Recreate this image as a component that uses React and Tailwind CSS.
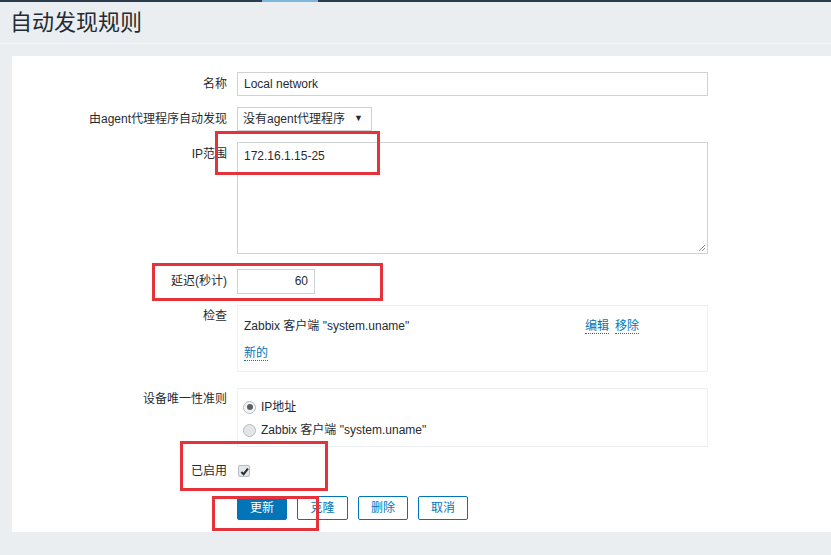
import { useState } from 'react';

const font = { fontFamily: '"Liberation Sans", Arial, "Noto Sans CJK SC", sans-serif' };

function Label({ children, className = '' }) {
  return (
    <div className={`w-[225px] shrink-0 pr-[10px] text-right text-[#1f2c33] ${className}`}>{children}</div>
  );
}

function Radio({ checked }) {
  return (
    <span
      className={`inline-flex items-center justify-center w-[13px] h-[13px] rounded-full border border-[#b7bcc0] ${
        checked ? 'bg-[#f4f4f4]' : 'bg-[#e3e5e7]'
      }`}
    >
      {checked && <span className="w-[6px] h-[6px] rounded-full bg-[#5a5f63]" />}
    </span>
  );
}

export default function App() {
  const [enabled] = useState(true);

  return (
    <div className="relative w-[831px] h-[555px] overflow-hidden bg-[#ebeef1] text-[12px]" style={font}>
      {/* top bar */}
      <div className="h-[2px] bg-[#2b3b4b] flex">
        <div className="ml-[262px] w-[56px] bg-[#7fb6dc]" />
      </div>

      {/* header */}
      <div className="h-[42px] pl-[10px] flex items-center border-b border-[#f3f5f6]">
        <h1 className="text-[22px] text-[#1f2c33] font-normal leading-none">自动发现规则</h1>
      </div>

      {/* panel */}
      <div className="ml-[12px] mt-[12px] h-[476px] bg-white pt-[16px]">
        {/* 名称 */}
        <div className="flex">
          <Label className="leading-[24px]">名称</Label>
          <div className="w-[471px] h-[24px] border border-[#cfd3d5] px-[6px] leading-[22px] text-[#1f2c33]">
            Local network
          </div>
        </div>

        {/* proxy */}
        <div className="flex mt-[11px]">
          <Label className="leading-[24px]">由agent代理程序自动发现</Label>
          <div className="w-[135px] h-[24px] border border-[#cfd3d5] pl-[5px] pr-[8px] flex items-center justify-between text-[#1f2c33]">
            <span>没有agent代理程序</span>
            <span className="text-[9px] text-[#1f2c33]">▼</span>
          </div>
        </div>

        {/* IP range */}
        <div className="flex mt-[11px]">
          <Label className="leading-[24px]">IP范围</Label>
          <div className="relative w-[471px] h-[112px] border border-[#cfd3d5] px-[6px] pt-[4px] text-[#1f2c33]">
            172.16.1.15-25
            <svg className="absolute right-[1px] bottom-[1px]" width="9" height="9" viewBox="0 0 9 9">
              <path d="M8 2 L2 8 M8 5 L5 8" stroke="#8a8f93" strokeWidth="1" />
            </svg>
          </div>
        </div>

        {/* delay */}
        <div className="flex mt-[15px]">
          <Label className="leading-[25px]">延迟(秒计)</Label>
          <div className="w-[78px] h-[25px] border border-[#cfd3d5] px-[6px] leading-[23px] text-right text-[#1f2c33]">
            60
          </div>
        </div>

        {/* checks */}
        <div className="flex mt-[11px]">
          <Label className="leading-[22px]">检查</Label>
          <div className="w-[471px] h-[67px] border border-[#edf0f2] pl-[6px] pt-[12px] text-[#1f2c33]">
            <div className="flex items-center h-[16px]">
              <span className="w-[341px]">Zabbix 客户端 "system.uname"</span>
              <span className="text-[#0275b8] border-b border-dotted border-[#0275b8] leading-[14px]">编辑</span>
              <span className="ml-[6px] text-[#0275b8] border-b border-dotted border-[#0275b8] leading-[14px]">移除</span>
            </div>
            <div className="mt-[12px] flex">
              <span className="text-[#0275b8] border-b border-dotted border-[#0275b8] leading-[14px]">新的</span>
            </div>
          </div>
        </div>

        {/* uniqueness */}
        <div className="flex mt-[16px]">
          <Label className="leading-[22px]">设备唯一性准则</Label>
          <div className="w-[471px] h-[59px] border border-[#edf0f2] pl-[5px] pt-[10px] text-[#1f2c33]">
            <div className="flex items-center gap-[5px] h-[16px]">
              <Radio checked />
              <span>IP地址</span>
            </div>
            <div className="flex items-center gap-[5px] h-[16px] mt-[7px]">
              <Radio />
              <span>Zabbix 客户端 "system.uname"</span>
            </div>
          </div>
        </div>

        {/* enabled */}
        <div className="flex mt-[16px] items-center">
          <Label className="leading-[16px]">已启用</Label>
          <span className="ml-[1px] w-[12px] h-[12px] rounded-[2px] border border-[#b7bcc0] bg-[#e3e5e7] flex items-center justify-center">
            {enabled && (
              <svg width="9" height="9" viewBox="0 0 10 10">
                <path d="M1.5 5.5 L4 8 L8.8 1.8" stroke="#2a2f33" strokeWidth="2.2" fill="none" />
              </svg>
            )}
          </span>
        </div>

        {/* buttons */}
        <div className="flex mt-[17px] gap-[10px] pl-[225px]">
          <button className="w-[50px] h-[24px] rounded-[2px] bg-[#0275b8] border border-[#0275b8] text-white">更新</button>
          <button className="w-[51px] h-[24px] rounded-[2px] bg-white border border-[#0275b8] text-[#0275b8]">克隆</button>
          <button className="w-[50px] h-[24px] rounded-[2px] bg-white border border-[#0275b8] text-[#0275b8]">删除</button>
          <button className="w-[50px] h-[24px] rounded-[2px] bg-white border border-[#0275b8] text-[#0275b8]">取消</button>
        </div>
      </div>

      {/* red annotation boxes */}
      <div className="absolute left-[215px] top-[131px] w-[165px] h-[44px] border-[3px] border-[#e5333b]" />
      <div className="absolute left-[152px] top-[263px] w-[231px] h-[38px] border-[3px] border-[#e5333b]" />
      <div className="absolute left-[180px] top-[441px] w-[148px] h-[50px] border-[3px] border-[#e5333b]" />
      <div className="absolute left-[212px] top-[496px] w-[107px] h-[35px] border-[3px] border-[#e5333b]" />
    </div>
  );
}
